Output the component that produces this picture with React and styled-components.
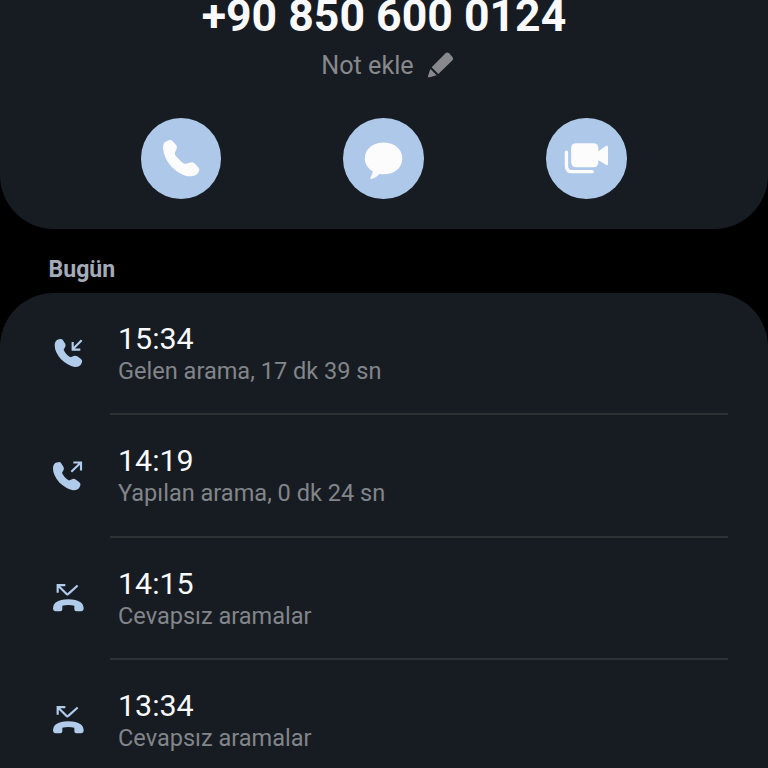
import React from 'react';
import styled, { createGlobalStyle } from 'styled-components';

const calls = [
  { id: 1, type: 'incoming', time: '15:34', detail: 'Gelen arama, 17 dk 39 sn' },
  { id: 2, type: 'outgoing', time: '14:19', detail: 'Yapılan arama, 0 dk 24 sn' },
  { id: 3, type: 'missed', time: '14:15', detail: 'Cevapsız aramalar' },
  { id: 4, type: 'missed', time: '13:34', detail: 'Cevapsız aramalar' },
];

const PencilIcon = () => (
  <svg width="28" height="28" viewBox="0 0 84 84">
    <path d="M17 49 L57 8 Q63 2 69 7 L79 17 Q84 23 78 29 L37 69 Z" />
    <path d="M13 54 L32 73 L11 79 Q5 80 6 75 Z" />
  </svg>
);

const PhoneIcon = () => (
  <svg viewBox="33 25.5 240 240">
    <path d="M106 96 L115 92 Q123 89 128 95 L138 107 Q142 112 139 118 L134 129 Q133 134 137 139 L154 157 Q160 163 167 162 L181 158 Q188 156 193 161 L204 173 Q209 179 206 184 L200 193 Q193 199 172 199 Q151 197 124 171 Q101 145 99 117 Q98 101 106 96 Z" />
  </svg>
);

const MessageIcon = () => (
  <svg viewBox="28 25 240 240">
    <path d="M149 98 C181 98 205 118 205 145 C205 173 182 193 149 193 Q142 193 137 192 Q128 202 114 207 Q107 208 110 202 Q116 194 117 184 C101 175 93 162 93 145 C93 118 117 98 149 98 Z" />
  </svg>
);

const VideoIcon = () => (
  <svg viewBox="31 25 240 240">
    <path d="M121 100 H172 Q187 100 187 115 V124 L211 108 Q216 106 216 112 V163 Q216 168 211 165 L187 151 V157 Q187 172 172 172 H121 Q106 172 106 157 V115 Q106 100 121 100 Z" />
    <path d="M92 127 V168 Q92 185 109 185 H169" fill="none" stroke="currentColor" strokeWidth="10" strokeLinecap="round" />
  </svg>
);

const handset =
  'M52 44 L60 42 Q66 41 69 46 L76 57 Q78 62 75 67 L71 74 Q77 89 92 97 L101 93 Q107 91 112 94 L123 102 Q128 106 126 112 L122 120 Q116 127 104 126 Q83 122 63 103 Q44 81 44 61 Q44 49 52 44 Z';

const CallTypeIcon = ({ type }) => {
  if (type === 'incoming') {
    return (
      <svg viewBox="30 27 108 108">
        <path d={handset} />
        <Arrow d="M125 46 L98 73 M98 51 V74 H121" />
      </svg>
    );
  }
  if (type === 'outgoing') {
    return (
      <svg viewBox="30 33.6 108 108">
        <path d={handset} transform="translate(-5 10)" />
        <Arrow d="M94 81 L122 54 M100 53 H123 V77" />
      </svg>
    );
  }
  return (
    <svg viewBox="30 26.5 108 108">
      <path d="M85 87 Q109 87 122 96 Q131 103 131 116 Q131 123 124 123 H109 Q103 123 103 117 V107 Q85 102 67 107 V117 Q67 123 61 123 H46 Q39 123 39 116 Q39 103 48 96 Q61 87 85 87 Z" />
      <Arrow d="M53 68 V45 H76 M54 46 L79 71 Q82 74 85 71 L113 46" />
    </svg>
  );
};

const App = () => (
  <>
    <GlobalStyle />
    <Screen>
      <ContactPanel>
        <PhoneNumber>+90 850 600 0124</PhoneNumber>
        <Note>
          Not ekle
          <PencilIcon />
        </Note>
        <Actions>
          <ActionButton aria-label="Ara"><PhoneIcon /></ActionButton>
          <ActionButton aria-label="Mesaj"><MessageIcon /></ActionButton>
          <ActionButton aria-label="Görüntülü arama"><VideoIcon /></ActionButton>
        </Actions>
      </ContactPanel>
      <DayLabel>Bugün</DayLabel>
      <CallList>
        {calls.map((call) => (
          <CallRow key={call.id}>
            <IconBox><CallTypeIcon type={call.type} /></IconBox>
            <CallInfo>
              <Time>{call.time}</Time>
              <Detail>{call.detail}</Detail>
            </CallInfo>
          </CallRow>
        ))}
      </CallList>
    </Screen>
  </>
);

const GlobalStyle = createGlobalStyle`
  * {
    box-sizing: border-box;
  }

  body {
    margin: 0;
    background: #000;
    font-family: Roboto, sans-serif;
    overflow: hidden;
  }
`;

const Screen = styled.div`
  width: 768px;
  height: 768px;
  display: flex;
  flex-direction: column;
  overflow: hidden;
  background: #000;
`;

const ContactPanel = styled.header`
  flex: none;
  height: 228.5px;
  display: flex;
  flex-direction: column;
  align-items: center;
  background: #171c22;
  border-radius: 0 0 54px 54px;
`;

const PhoneNumber = styled.h1`
  margin: 0;
  height: 42px;
  display: flex;
  align-items: flex-end;
  font-size: 44.6px;
  line-height: 52px;
  font-weight: 700;
  color: #fafafc;
  white-space: nowrap;
`;

const Note = styled.div`
  display: flex;
  align-items: center;
  gap: 12px;
  height: 30px;
  margin: 9px 0 0 7px;
  font-size: 25.2px;
  line-height: 30px;
  color: #87898c;

  svg {
    fill: #87898c;
    margin-bottom: 2px;
  }
`;

const Actions = styled.div`
  width: 486px;
  margin: 37px 1px 0 0;
  display: flex;
  justify-content: space-between;
`;

const ActionButton = styled.button`
  width: 80.5px;
  height: 80.5px;
  padding: 0;
  border: none;
  border-radius: 50%;
  background: #adc8e8;
  color: #fcfcfd;

  svg {
    display: block;
    width: 100%;
    height: 100%;
    fill: currentColor;
  }
`;

const DayLabel = styled.h2`
  flex: none;
  height: 64.5px;
  margin: 0;
  padding: 27px 0 0 48.5px;
  font-size: 23.1px;
  line-height: 28px;
  font-weight: 700;
  color: #a3abb9;
`;

const CallList = styled.div`
  flex: 1;
  background: #171c22;
  border-radius: 54px 54px 0 0;
`;

const CallRow = styled.div`
  height: 122.3px;
  display: flex;
  padding: 0 40px 0 50px;
`;

const IconBox = styled.div`
  width: 36px;
  height: 36px;
  margin: 41px 24px 0 0;
  color: #b1cbea;

  svg {
    display: block;
    width: 36px;
    height: 36px;
    fill: currentColor;
  }
`;

const Arrow = styled.path`
  fill: none;
  stroke: currentColor;
  stroke-width: 6.5;
`;

const CallInfo = styled.div`
  flex: 1;
  padding: 28.2px 0 0 8px;
  border-bottom: 2px solid #2e3235;

  ${CallRow}:last-child & {
    border-bottom: none;
  }
`;

const Time = styled.div`
  font-size: 30.4px;
  line-height: 36px;
  color: #fafafc;
`;

const Detail = styled.div`
  font-size: 23.55px;
  line-height: 28px;
  color: #828589;
`;

export default App;
